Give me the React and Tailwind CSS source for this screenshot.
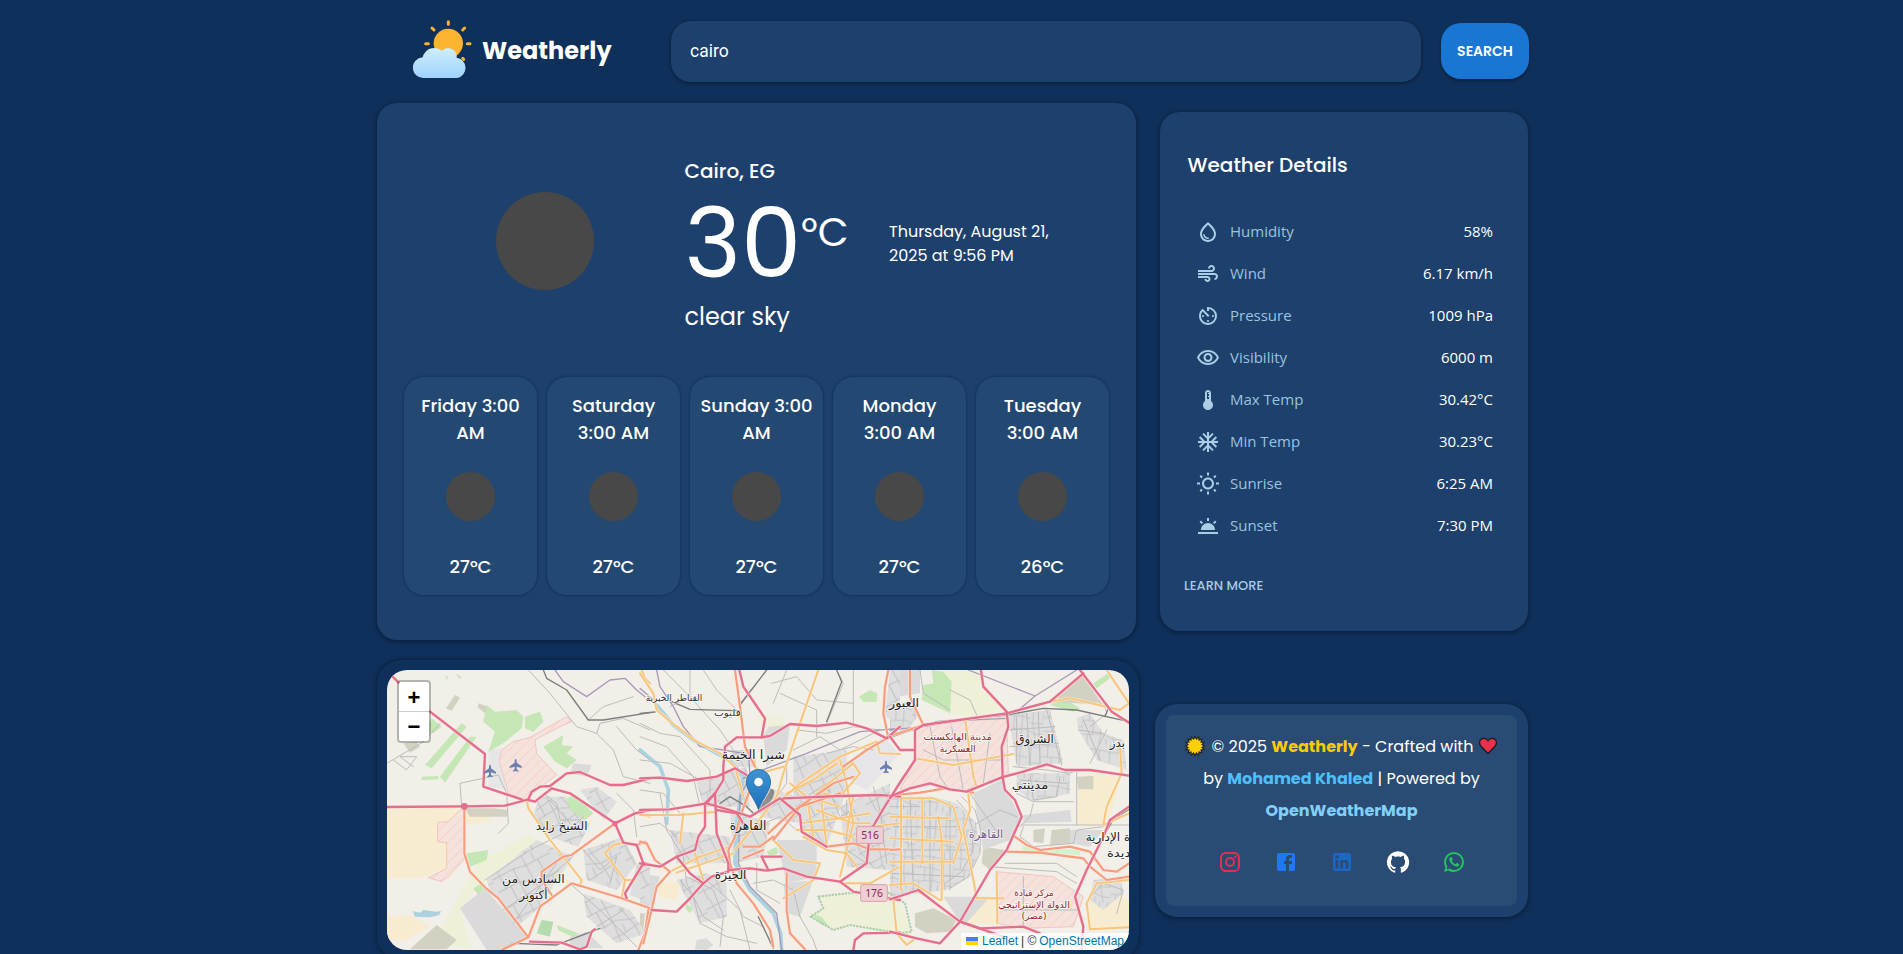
import React from "react";
import {
  MdOutlineWaterDrop,
  MdAir,
  MdAvTimer,
  MdOutlineVisibility,
  MdDeviceThermostat,
  MdAcUnit,
  MdOutlineWbSunny,
  MdWbTwilight,
} from "react-icons/md";

const forecast = [
  { day: "Friday 3:00 AM", temp: "27°C" },
  { day: "Saturday 3:00 AM", temp: "27°C" },
  { day: "Sunday 3:00 AM", temp: "27°C" },
  { day: "Monday 3:00 AM", temp: "27°C" },
  { day: "Tuesday 3:00 AM", temp: "26°C" },
];

const details = [
  { icon: MdOutlineWaterDrop, label: "Humidity", value: "58%" },
  { icon: MdAir, label: "Wind", value: "6.17 km/h" },
  { icon: MdAvTimer, label: "Pressure", value: "1009 hPa" },
  { icon: MdOutlineVisibility, label: "Visibility", value: "6000 m" },
  { icon: MdDeviceThermostat, label: "Max Temp", value: "30.42°C" },
  { icon: MdAcUnit, label: "Min Temp", value: "30.23°C" },
  { icon: MdOutlineWbSunny, label: "Sunrise", value: "6:25 AM" },
  { icon: MdWbTwilight, label: "Sunset", value: "7:30 PM" },
];

const socials = [
  {
    name: "Instagram",
    color: "#e4304e",
    d: "M7.8 2h8.4C19.4 2 22 4.6 22 7.8v8.4a5.8 5.8 0 0 1-5.8 5.8H7.8C4.6 22 2 19.4 2 16.2V7.8A5.8 5.8 0 0 1 7.8 2m-.2 2A3.6 3.6 0 0 0 4 7.6v8.8C4 18.39 5.61 20 7.6 20h8.8a3.6 3.6 0 0 0 3.6-3.6V7.6C20 5.61 18.39 4 16.4 4H7.6m9.65 1.5a1.25 1.25 0 0 1 1.25 1.25A1.25 1.25 0 0 1 17.25 8 1.25 1.25 0 0 1 16 6.75a1.25 1.25 0 0 1 1.25-1.25M12 7a5 5 0 0 1 5 5 5 5 0 0 1-5 5 5 5 0 0 1-5-5 5 5 0 0 1 5-5m0 2a3 3 0 0 0-3 3 3 3 0 0 0 3 3 3 3 0 0 0 3-3 3 3 0 0 0-3-3z",
  },
  {
    name: "Facebook",
    color: "#1f78f0",
    d: "M5 3h14a2 2 0 0 1 2 2v14a2 2 0 0 1-2 2h-4v-7h3v-3h-3V9c0-.55.45-1 1-1h2V5h-2.5C13.57 5 12 6.57 12 8.5V11h-2v3h2v7H5a2 2 0 0 1-2-2V5a2 2 0 0 1 2-2z",
  },
  {
    name: "LinkedIn",
    color: "#1c66c4",
    d: "M19 3a2 2 0 0 1 2 2v14a2 2 0 0 1-2 2H5a2 2 0 0 1-2-2V5a2 2 0 0 1 2-2h14m-.5 15.5v-5.3a3.26 3.26 0 0 0-3.26-3.26c-.85 0-1.84.52-2.32 1.3v-1.11h-2.79v8.37h2.79v-4.93c0-.77.62-1.4 1.39-1.4a1.4 1.4 0 0 1 1.4 1.4v4.93h2.79M6.88 8.56a1.68 1.68 0 0 0 1.68-1.68c0-.93-.75-1.69-1.68-1.69a1.69 1.69 0 0 0-1.69 1.69c0 .93.76 1.68 1.69 1.68m1.39 9.94v-8.37H5.5v8.37h2.77z",
  },
  {
    name: "GitHub",
    color: "#ffffff",
    d: "M12 1.27a11 11 0 00-3.48 21.46c.55.09.73-.28.73-.55v-1.84c-3.03.64-3.67-1.46-3.67-1.46-.55-1.29-1.28-1.65-1.28-1.65-.92-.65.1-.65.1-.65 1.1 0 1.73 1.1 1.73 1.1.92 1.65 2.57 1.2 3.21.92a2 2 0 01.64-1.47c-2.47-.27-5.04-1.19-5.04-5.5 0-1.1.46-2.1 1.2-2.84a3.76 3.76 0 010-2.93s.91-.28 3.11 1.1c1.8-.49 3.7-.49 5.5 0 2.1-1.38 3.02-1.1 3.02-1.1a3.76 3.76 0 01.1 2.93c.83.74 1.2 1.74 1.2 2.94 0 4.21-2.57 5.13-5.04 5.4.45.37.82.92.82 2.02v3.03c0 .27.1.64.73.55A11 11 0 0012 1.27",
  },
  {
    name: "WhatsApp",
    color: "#22c55e",
    d: "M16.75 13.96c.25.13.41.2.46.3.06.11.04.61-.21 1.18-.2.56-1.24 1.1-1.7 1.12-.46.02-.47.36-2.96-.73-2.49-1.09-3.99-3.75-4.11-3.92-.12-.17-.96-1.38-.92-2.61.05-1.22.69-1.8.95-2.04.24-.26.51-.29.68-.26h.47c.15 0 .36-.06.55.45l.69 1.87c.06.13.1.28.01.44l-.27.41-.39.42c-.12.12-.26.25-.12.5.12.26.62 1.09 1.32 1.78.91.88 1.71 1.17 1.95 1.3.24.14.39.12.54-.04l.81-.94c.19-.25.35-.19.58-.11l1.67.88M12 2a10 10 0 0 1 10 10 10 10 0 0 1-10 10c-1.97 0-3.8-.57-5.35-1.55L2 22l1.55-4.65A9.969 9.969 0 0 1 2 12 10 10 0 0 1 12 2m0 2a8 8 0 0 0-8 8c0 1.72.54 3.31 1.46 4.61L4.5 19.5l2.89-.96A7.95 7.95 0 0 0 12 20a8 8 0 0 0 8-8 8 8 0 0 0-8-8z",
  },
];

/* Map tiles: three side-by-side sections, each with its own origin. */
const tiles = [
  {
    x: -17,
    land: [
      ["#f7ecd0", "51,478 275,472 230,520 230,655 150,685 51,686"],
      ["#f7ecd0", "51,800 120,795 180,830 110,870 51,870"],
      ["#f7ecd0", "285,475 375,510 290,525"],
      ["#eef0d8", "190,880 320,640 480,550 500,570 350,690 270,775 300,895"],
      ["#d3d1c1", "255,135 270,143 245,182 228,175"],
      ["#d3d1c1", "325,160 355,170 345,190 323,172"],
      ["#d3d1c1", "285,475 370,475 415,480 410,500 300,500"],
      ["#d3d1c1", "200,825 260,870 230,898 120,898"],
      ["#d3d1c1", "100,280 140,275 150,290 120,308"],
      ["#e6e6e6", "355,300 395,295 388,335 410,420 355,410"],
      ["#c5e6b5", "350,165 375,185 440,180 460,200 455,235 400,280 355,305 375,245 340,215"],
      ["#c5e6b5", "465,200 510,185 520,215 490,245 465,235"],
      ["#c5e6b5", "165,345 275,220 290,230 185,355"],
      ["#c5e6b5", "155,380 205,378 205,388 155,390"],
      ["#c5e6b5", "210,380 300,260 320,260 225,398"],
      ["#c5e6b5", "520,290 580,255 575,285 610,290 590,310 620,330 590,355 555,335"],
      ["#c5e6b5", "575,450 615,435 670,490 640,515 590,480"],
      ["#c5e6b5", "290,610 355,600 350,630 300,650"],
      ["#c5e6b5", "185,205 215,230 190,250 165,240"],
      ["#c5e6b5", "225,80 235,78 230,90"],
      ["#c5e6b5", "258,70 275,82 268,88"],
      ["#c5e6b5", "560,825 625,850 610,862 565,840"],
      ["#c5e6b5", "310,715 335,700 345,712 325,735"],
      ["#b5dcae", "515,810 550,815 540,860 500,850"],
      ["#aad3df", "128,783 150,788 160,780 200,785 213,783 208,795 180,802 135,800"],
    ],
    city: [
      "505,440 590,440 600,480 660,520 625,590 540,560 490,500",
      "630,420 680,410 740,455 700,510",
      "350,690 500,570 610,620 500,780 440,830 360,720",
      "640,600 760,560 800,640 740,720 650,690",
      "640,730 780,780 830,850 740,880 650,800",
      "800,640 840,650 840,760 780,735",
    ],
    plain: [
      "270,775 345,715 470,860 400,900 350,900",
      "610,340 665,345 650,380 600,370",
      "600,860 650,845 700,895 600,895",
    ],
    military: [
      "270,480 285,475 285,625 235,680 215,695 175,683 230,655 230,578 203,575 203,517 235,515",
      "395,300 430,275 480,262 590,200 605,215 560,235 495,270 500,310 560,375 500,420 470,450 415,430 388,335",
    ],
    river: [],
    metro: ["555,60 580,95 650,140 720,90 765,85 800,120 825,140"],
    minor: [
      "475,60 540,130 620,230 680,250 730,300 760,380 840,400",
      "51,340 160,275 210,220",
      "70,330 110,360 140,320 90,320 130,350",
      "270,400 385,375 410,430 415,520 385,550",
      "270,400 275,470",
      "345,690 480,600 600,540 640,500",
      "400,780 520,700 640,590",
      "430,820 560,640",
      "600,700 700,790 800,890",
      "680,830 760,780",
      "640,600 690,660 740,620 720,700",
      "655,210 700,170 790,140",
      "680,250 690,220 760,205 840,240",
      "740,230 800,300 840,330",
      "740,430 790,480 800,560",
      "520,430 560,460 570,510 620,510",
      "500,480 540,450 600,520",
    ],
    rail: ["520,60 530,85 590,120 655,210 700,210 840,188", "400,895 430,880 560,885 690,835"],
    yellow: [
      "470,448 475,475 540,570 635,690 630,705",
      "755,745 765,690 735,650 705,610 730,585 760,578",
      "765,690 795,690",
      "795,490 840,500",
      "815,60 825,85 840,100",
    ],
    orange: [
      "283,470 283,610 300,665 345,712 385,745 475,862 395,900",
      "475,862 510,770 605,700 755,745 840,775",
      "735,520 605,615 580,620 515,665 515,690 545,735",
      "800,585 825,575 840,600",
      "835,780 825,850 805,900",
    ],
    trunk: [
      "66,78 86,98",
      "180,185 345,312 340,410 455,448",
      "51,471 283,469 405,467 475,448 485,425 510,410 540,408 590,370 630,366 720,405 760,405 840,385",
      "475,450 495,455 545,415 600,430 735,520 760,578 800,585 820,640 840,643",
      "735,520 795,490 840,480",
      "820,640 765,730 770,745",
      "480,875 575,878 630,898 650,890 665,845 675,838",
    ],
    planes: [[437, 346], [360, 363]],
  },
  {
    x: 253,
    land: [
      ["#f7ecd0", "55,690 120,700 110,750 55,740"],
      ["#eef0d8", "345,195 430,200 430,240 380,235"],
      ["#e6e6ea", "600,360 730,260 780,310 680,420 640,400"],
      ["#eef0d8", "540,740 640,728 740,725 780,760 780,845 700,840 630,825 580,840 510,800 550,775"],
      ["#c5e6b5", "657,140 690,120 712,130 710,155 670,155"],
      ["#c5e6b5", "135,760 160,775 150,790 138,778"],
      ["#c5e6b5", "510,790 545,800 570,835 540,820"],
      ["#c5e6b5", "380,605 410,590 415,610 390,620"],
      ["#c5e6b5", "660,610 680,615 675,630"],
      ["#d3d1c1", "0,790 15,790 10,840 0,840"],
    ],
    city: [
      "270,300 345,300 345,350 290,350",
      "170,395 320,350 330,470 190,470",
      "350,400 470,440 480,520 360,500",
      "460,320 620,300 620,420 560,590 490,560 460,440",
      "90,540 270,560 270,640 110,640",
      "110,690 200,670 260,700 260,800 180,820",
      "600,470 750,400 750,660 620,650",
      "270,480 390,520 370,620 280,640",
      "750,60 780,60 780,220 735,200",
    ],
    plain: [
      "385,230 450,225 440,300 380,350 370,260",
      "410,570 530,570 530,680 440,700",
      "0,670 60,680 30,770 0,770",
      "430,700 520,690 480,800 440,790",
      "170,870 200,865 220,885 200,900 165,898",
    ],
    military: [],
    river: [
      "50,165 100,225 160,270 230,310 270,330 310,380 300,450 290,520 285,640 330,720 400,790 422,850 425,900",
      "0,300 60,350 85,420 80,520",
    ],
    metro: [
      "50,60 60,110 100,170 130,230 180,290 250,300 310,310",
      "325,300 330,380 300,440 295,640 330,710 410,790 425,900",
      "310,385 380,355 500,310 660,245 780,235",
      "0,115 40,150",
    ],
    minor: [
      "0,220 60,250 120,260 210,360 210,430",
      "70,60 150,140 240,240 280,300",
      "150,60 150,140 90,170",
      "190,60 230,120 290,180",
      "0,260 80,290 160,380 180,470",
      "0,330 90,340 180,390",
      "0,420 70,430 120,490",
      "60,430 80,540 130,620 140,700 190,800 250,840",
      "0,530 60,520 110,560",
      "120,690 160,740 180,820 260,860 350,880",
      "140,680 220,720 250,800 240,890",
      "200,690 300,780 330,900",
      "270,720 310,800 370,830",
      "380,60 300,160",
      "395,100 470,80 530,150 640,160",
      "400,160 440,60",
      "590,60 610,100 560,220",
      "420,130 530,180 530,260",
      "640,60 640,220",
      "470,240 560,250 640,230 720,240",
      "460,300 540,260 600,300 720,240",
      "560,310 640,290 700,300",
      "350,530 420,500 470,540",
      "380,480 440,400 440,330",
      "350,640 350,720 420,760",
      "500,440 560,400 600,500 640,480",
      "620,450 620,600 680,640",
      "700,410 720,480 740,640",
      "340,700 400,690 460,720 480,800",
      "480,800 520,870 530,900",
    ],
    rail: [
      "380,60 300,165 302,190",
      "95,155 150,178 290,182",
      "0,190 45,186",
      "590,60 605,95 560,215",
      "240,460 270,440 320,470 340,490",
      "355,800 400,895",
    ],
    yellow: [
      "535,60 480,220 430,370 410,440 350,520 285,600",
      "0,70 40,130 50,180 110,230 170,275 240,310 285,350 310,440",
      "360,370 430,350",
      "430,445 480,400 600,320 710,275",
      "440,430 520,390 590,340",
      "480,520 600,505 690,490",
      "530,480 640,520 690,520",
      "90,665 180,620 270,590",
      "110,668 280,610",
      "130,490 120,580",
      "0,495 120,495 230,485",
      "165,610 190,690",
      "400,570 460,630 540,640 520,690 430,745",
      "530,430 640,340 660,370 600,440 550,430",
      "545,460 560,590",
      "600,330 620,400 640,520 620,600 600,680",
      "490,560 560,600 620,610 650,650",
      "500,440 520,560",
      "710,275 720,310 780,312",
      "450,400 500,440 600,470",
      "340,300 345,350 390,400",
      "470,540 560,540 640,560",
      "600,440 640,440 620,550",
      "700,530 780,520",
      "600,700 690,700 780,650",
    ],
    orange: [
      "285,60 300,170 315,290 345,350",
      "745,60 735,110 730,190 745,265",
      "330,420 300,500 285,560 265,600 270,640 290,700 340,760 390,840 400,890",
      "0,575 20,580 45,630 90,665 50,710 30,800 10,880",
      "385,550 450,490 580,400 640,380",
      "400,570 480,470 600,430",
      "310,590 360,590 400,560",
      "310,625 370,600",
      "440,670 440,780 450,850 495,898",
      "560,590 640,580 690,598 780,598",
      "750,260 680,300 610,350",
    ],
    trunk: [
      "298,60 310,110 375,205 365,262",
      "0,385 60,383 140,393 230,380 285,355 320,375",
      "365,262 290,262 255,290 250,350 250,390 225,430 200,460",
      "365,262 390,258 450,222 530,228 620,218 680,235 740,265 780,230",
      "0,480 90,478 200,460 270,480 330,500 420,445 480,495 485,545 560,590",
      "0,640 60,650 110,620 165,600 175,560 195,530 195,460 225,430",
      "110,620 150,670 190,700 215,680 265,665 265,640 230,550 225,430",
      "230,480 290,490 310,520",
      "265,660 330,655 380,662 430,655 500,680 600,695 680,640 690,545 740,460 780,400",
      "35,780 110,785 150,745 190,700",
      "430,445 600,438 720,435 780,440",
      "600,695 640,725 750,745 780,750",
      "365,620 425,620",
      "365,620 385,660",
      "640,900 645,870 670,850 780,848",
    ],
    planes: [[738, 351]],
  },
  {
    x: 503,
    land: [
      ["#eef0d8", "160,60 270,60 290,110 340,180 240,200 180,190"],
      ["#f7ecd0", "590,370 690,380 670,470 640,530 560,525 565,400"],
      ["#f7ecd0", "245,760 320,740 320,825 230,820"],
      ["#f7ecd0", "620,695 717,750 717,830 600,835 590,760"],
      ["#c5e6b5", "125,60 160,65 185,95 180,190 95,150 100,105 130,100"],
      ["#c5e6b5", "480,165 520,145 570,175 550,185"],
      ["#c5e6b5", "610,100 655,70 660,85 620,115"],
      ["#eef0d8", "0,755 30,765 50,800 65,855 20,840 0,840"],
      ["#d3f0cf", "395,590 570,600 570,615 400,610"],
      ["#d3d1c1", "280,590 345,600 300,660 275,640"],
      ["#d3d1c1", "75,790 130,775 200,810 180,845 110,850 75,830"],
      ["#d3d1c1", "490,155 575,75 640,165 560,160"],
      ["#d3d1c1", "430,540 465,535 460,580 430,575"],
      ["#d3d1c1", "485,540 540,535 540,580 480,585"],
      ["#d3d1c1", "560,380 610,378 610,418 565,418"],
    ],
    city: [
      "0,180 60,150 90,190 60,230 0,245",
      "355,195 480,180 520,340 470,345 380,350",
      "560,205 600,190 640,250 700,270 710,360 620,330 565,240",
      "0,440 130,440 200,460 260,520 270,600 240,680 170,720 0,740",
      "380,370 540,370 540,430 430,455 380,420",
      "610,690 690,680 700,730 640,780 600,750",
    ],
    plain: [
      "10,60 90,60 90,130 20,140",
      "250,430 335,390 390,500 360,570 280,600",
      "540,540 640,540 600,590 540,580",
      "160,740 300,740 220,830",
      "400,495 540,480 545,515 400,520",
    ],
    military: [
      "95,230 350,192 355,380 210,425 120,400 30,420 75,330 75,250",
      "320,665 490,680 580,740 550,830 400,835 320,820",
    ],
    river: [],
    metro: ["235,60 435,138 560,60", "435,138 380,185", "350,205 200,212 100,230 0,240"],
    minor: [
      "90,60 100,130 180,180",
      "120,230 150,380 170,410",
      "100,300 160,330 340,330",
      "185,230 220,420",
      "300,250 280,400",
      "370,350 470,360 540,370 560,360 560,525",
      "380,430 430,455 550,455",
      "395,525 717,525",
      "400,530 390,560 430,590 550,580 560,540 640,530",
      "430,460 420,500 390,530",
      "300,650 500,665 560,700",
      "345,640 500,640 560,680",
      "400,680 400,830",
      "340,780 560,780",
      "380,200 380,340",
      "410,190 420,345",
      "445,185 450,340",
      "470,180 515,345",
      "355,240 495,230",
      "360,290 505,280",
      "565,240 640,250",
      "580,210 630,330",
      "600,340 650,240",
      "640,150 650,190 600,230",
      "240,430 330,560",
      "260,520 330,480 380,500",
      "215,440 255,480 272,540 270,610 235,680 180,715",
      "200,450 235,490 250,550 245,610 215,665 165,700",
      "0,470 90,470",
      "10,530 200,530",
      "0,600 240,600",
      "60,440 70,720",
      "120,440 120,730",
      "180,470 180,720",
      "0,670 220,680",
      "600,740 640,700 700,720 680,790",
      "390,390 530,400",
      "420,375 430,450 500,440 510,380",
      "180,120 240,150 260,195",
    ],
    rail: ["0,262 140,215 350,195 460,175 560,180 717,215", "570,60 655,175 645,200", "717,478 670,508 640,560"],
    yellow: [
      "0,500 180,505",
      "0,565 190,575",
      "0,635 190,635",
      "33,440 33,720",
      "97,450 97,640",
      "145,500 155,570 155,750",
      "35,445 130,445 190,470 215,560 190,640",
      "235,430 240,480 220,540 250,690 260,745 340,745",
      "75,325 190,345 370,312",
      "225,205 250,380 260,410",
      "320,665 322,820",
      "600,838 717,832",
      "600,838 590,760 620,700 717,690",
      "480,155 540,145 690,180 717,160",
      "650,60 717,160",
      "690,290 695,370 650,470 640,525 717,490",
      "0,705 70,700 150,750",
      "10,750 20,850 50,885 70,870",
    ],
    orange: [
      "60,60 60,140 100,225 0,258",
      "375,560 410,585 450,600 540,590 600,605 640,660 680,665 717,640",
      "350,605 450,608 580,625 600,650 650,690 717,680",
      "0,600 30,598",
      "15,435 90,428 165,415 250,428",
    ],
    trunk: [
      "273,60 280,110 350,185 355,230 335,290 338,382 345,420 375,450 395,500 350,600 300,660 210,815 150,880 80,865 0,845",
      "0,445 25,405 75,330",
      "0,440 60,415 120,400 180,418 230,425 335,382 400,365 470,343 525,360 600,360 717,377",
      "75,330 75,240 100,225 350,190 480,155 580,70",
      "75,300 30,300 0,260",
      "570,60 665,185 717,218",
      "717,470 660,510 640,560 590,660 555,740 580,830 575,900",
      "0,748 85,720 150,770 210,815 270,835 400,830 450,850",
      "210,815 340,860",
    ],
    planes: [],
  },
];

const places = [
  [0, 575, 541, 155, "الشيخ زايد", 36, "#222"],
  [0, 490, 699, 188, "السادس من", 36, "#222"],
  [0, 490, 748, 85, "أكتوبر", 36, "#222"],
  [1, 102, 154, 170, "القناطر الخيرية", 27, "#333"],
  [1, 262, 198, 80, "قليوب", 28, "#333"],
  [1, 340, 328, 190, "شبرا الخيمة", 38, "#222"],
  [1, 324, 541, 110, "القاهرة", 38, "#222"],
  [1, 272, 687, 95, "الجيزة", 36, "#222"],
  [2, 42, 170, 90, "العبور", 36, "#222"],
  [2, 203, 269, 205, "مدينة الهايكستب", 28, "#8f1f2c"],
  [2, 203, 305, 108, "العسكرية", 28, "#8f1f2c"],
  [2, 434, 278, 115, "الشروق", 36, "#222"],
  [2, 682, 290, 46, "بدر", 34, "#222"],
  [2, 420, 418, 110, "مدينتي", 34, "#222"],
  [2, 288, 563, 104, "القاهرة", 34, "#7a5a8c"],
  [2, 654, 572, 134, "ة الإدارية", 34, "#222"],
  [2, 686, 622, 70, "ديدة", 34, "#222"],
  [2, 432, 738, 118, "مركز قيادة", 27, "#8f1f2c"],
  [2, 432, 773, 215, "الدولة الإستراتيجي", 27, "#8f1f2c"],
  [2, 432, 808, 75, "(مصر)", 27, "#8f1f2c"],
];

function Lines({ lines, color, width, casing }) {
  return (
    <g fill="none" strokeLinejoin="round" strokeLinecap="round">
      {casing && lines.map((p, i) => <polyline key={"c" + i} points={p} stroke={casing} strokeWidth={width + 3} />)}
      {lines.map((p, i) => (
        <polyline key={i} points={p} stroke={color} strokeWidth={width} />
      ))}
    </g>
  );
}

function CityMap() {
  const at = (t) => `translate(${t.x} -20) scale(0.33333)`;
  const layer = (render) =>
    tiles.map((t) => (
      <g key={t.x} transform={at(t)}>
        {render(t)}
      </g>
    ));
  const street =
    "M0 22H70L110 30H190M0 64H60L100 72M100 90H190M0 118L80 112L120 130H190M0 158H90L150 150M24 0V64M70 22V112L64 190M110 0V90L124 150V190M150 30V90M168 90L150 150V190M40 64V118M20 118V190M92 130V158M140 0V30";
  return (
    <svg viewBox="0 0 742 280" className="block h-[280px] w-[742px]">
      <defs>
        <pattern id="streets" width="190" height="190" patternUnits="userSpaceOnUse" patternTransform="rotate(-28)">
          <rect width="190" height="190" fill="#dedede" />
          <path d={street} stroke="#bdbdbd" strokeWidth="2.6" fill="none" />
        </pattern>
        <pattern id="grid" width="150" height="150" patternUnits="userSpaceOnUse" patternTransform="rotate(4) scale(0.79)">
          <rect width="190" height="190" fill="#dedede" />
          <path d={street} stroke="#bfbfbf" strokeWidth="3" fill="none" />
        </pattern>
        <pattern id="hatch" width="22" height="22" patternUnits="userSpaceOnUse" patternTransform="rotate(45)">
          <rect width="22" height="22" fill="#f5e2dc" />
          <path d="M0 0V22" stroke="#f2c2bd" strokeWidth="2.5" />
        </pattern>
        <linearGradient id="pin" x1="0" y1="0" x2="0" y2="1">
          <stop offset="0" stopColor="#3f94cf" />
          <stop offset="1" stopColor="#1c6fc0" />
        </linearGradient>
      </defs>
      <rect width="742" height="280" fill="#f2efe9" />
      {layer((t) => t.land.map(([fill, p], i) => <polygon key={i} points={p} fill={fill} />))}
      {layer((t) => t.plain.map((p, i) => <polygon key={i} points={p} fill="#dadada" />))}
      {layer((t) => t.city.map((p, i) => <polygon key={i} points={p} fill={t.x === 503 ? "url(#grid)" : "url(#streets)"} />))}
      {layer((t) => t.military.map((p, i) => <polygon key={i} points={p} fill="url(#hatch)" stroke="#f0b4ae" strokeWidth="2" />))}
      {layer((t) => <Lines lines={t.river} color="#aad3df" width={11} />)}
      {layer((t) => <Lines lines={t.minor} color="#bcbcbc" width={3} />)}
      {layer((t) => <Lines lines={t.metro} color="#a79ab8" width={4} />)}
      {layer((t) => <Lines lines={t.rail} color="#7d7d7d" width={4} />)}
      <g transform={at(tiles[1])}>
        <path d="M535 740L620 730L740 725L795 760L815 845L780 850L720 840L630 825L580 840L512 800L550 775Z" fill="none" stroke="#a9cfa9" strokeWidth="6" strokeDasharray="7 3" />
      </g>
      {layer((t) => <Lines lines={t.yellow} color="#f6c67f" width={6} casing="#f8efdc" />)}
      {layer((t) => <Lines lines={t.orange} color="#f79d7d" width={6.5} casing="#faeae0" />)}
      {layer((t) => <Lines lines={t.trunk} color="#e56f8a" width={7} casing="#f6e3e3" />)}
      <g transform={at(tiles[0])} fill="#e56f8a">
        <circle cx="283" cy="469" r="10" />
        <circle cx="735" cy="521" r="8" />
        <circle cx="820" cy="642" r="7" />
      </g>
      {layer((t) =>
        t.planes.map(([x, y], i) => (
          <path
            key={i}
            transform={`translate(${x} ${y})`}
            d="M0 -19C3 -19 3 -13 3 -8L18 3V8L3 4V11L8 16V19L0 17L-8 19V16L-3 11V4L-18 8V3L-3 -8C-3 -13 -3 -19 0 -19Z"
            fill="#6b7fae"
          />
        ))
      )}
      <g transform={at(tiles[1])} fontFamily="'Noto Sans', sans-serif" fontSize="31" textAnchor="middle" fill="#8a2450">
        <rect x="650" y="530" width="80" height="50" rx="5" fill="#edd0d5" stroke="#d9a0ab" strokeWidth="3" />
        <text x="690" y="566">516</text>
        <rect x="662" y="704" width="80" height="50" rx="5" fill="#edd0d5" stroke="#d9a0ab" strokeWidth="3" />
        <text x="702" y="740">176</text>
      </g>
      {places.map(([t, x, y, w, name, size, color]) => (
        <g key={name + x} transform={at(tiles[t])}>
          <text
            x={x}
            y={y}
            textAnchor="middle"
            fontFamily="'DejaVu Sans', sans-serif"
            fontSize={size}
            fill={color}
            stroke="#ffffff"
            strokeOpacity="0.7"
            strokeWidth="5"
            paintOrder="stroke"
            textLength={w}
            lengthAdjust="spacingAndGlyphs"
          >
            {name}
          </text>
        </g>
      ))}
      <path d="M372 139L384 119C389 118 388 126 383 132Z" fill="#000" opacity="0.35" />
      <path d="M371.500 139.500C368 129 359.500 121 359.500 112C359.500 105 365 99.500 371.500 99.500C378 99.500 383.500 105 383.500 112C383.500 121 375 129 371.500 139.500Z" fill="url(#pin)" stroke="#2e6ea6" strokeWidth="1" />
      <circle cx="371.500" cy="112" r="4.300" fill="#fff" />
    </svg>
  );
}

function Logo() {
  return (
    <svg viewBox="0 0 180 180" className="h-[60px] w-[60px] shrink-0">
      <defs>
        <linearGradient id="cloud" x1="0" y1="0" x2="0" y2="1">
          <stop offset="0" stopColor="#cdeffc" />
          <stop offset="1" stopColor="#9fd3fb" />
        </linearGradient>
      </defs>
      <g stroke="#fdb02c" strokeWidth="9" strokeLinecap="round">
        <path d="M106 8V16M57 27L63 33M155 27L149 33M38 74H46M163 74H171M149 118L152 121" />
      </g>
      <circle cx="106" cy="73" r="44" fill="#fdb430" />
      <path d="M32 177A31 31 0 0 1 29 115A36 36 0 0 1 87 95A26 26 0 0 1 131 116A31 31 0 0 1 133 177Z" fill="url(#cloud)" />
    </svg>
  );
}

function SunEmoji() {
  const pts = Array.from({ length: 32 }, (_, i) => {
    const r = i % 2 ? 6.2 : 8.6;
    const a = (i * Math.PI) / 16;
    return `${(10 + r * Math.cos(a)).toFixed(2)},${(10 + r * Math.sin(a)).toFixed(2)}`;
  }).join(" ");
  return (
    <svg viewBox="0 0 20 20" className="mr-0.5 inline-block h-5 w-5 align-[-4px]">
      <polygon points={pts} fill="#fbd009" stroke="#1d1d1d" strokeWidth="2" paintOrder="stroke" />
    </svg>
  );
}

function HeartEmoji() {
  return (
    <svg viewBox="0 0 20 20" className="inline-block h-5 w-5 align-[-4px]">
      <path d="M10 17.500L2.500 9.700C0.500 7.200 1.500 2.500 5.500 2.300C7.700 2.200 9.200 3.300 10 4.800C10.800 3.300 12.300 2.200 14.500 2.300C18.500 2.500 19.500 7.200 17.500 9.700Z" fill="#ec2f4b" stroke="#1d1d1d" strokeWidth="1.300" />
    </svg>
  );
}

export default function App() {
  return (
    <div className="h-[954px] w-full overflow-hidden bg-[#0f305b] font-['Poppins','Inter',sans-serif] text-white">
      <div className="ml-[377px] w-[1152px]">
        <header className="flex h-[103px] items-start pt-[21px]">
          <div className="-mt-[2px] flex w-[294px] items-center pl-[36px]">
            <Logo />
            <span className="ml-[9px] pt-1 text-[24px] leading-9 font-bold">Weatherly</span>
          </div>
          <div className="flex h-[61px] w-[750px] items-center rounded-[20px] bg-[#1d406d] px-[19px] font-['Roboto',sans-serif] text-[17.5px] shadow-[0_1px_3px_1px_rgba(0,0,0,0.3)]">
            cairo
          </div>
          <button className="mt-[2px] ml-5 h-14 w-[88px] rounded-[20px] bg-[#1976d2] text-[14px] font-semibold shadow-[0_2px_3px_rgba(0,0,0,0.35)]">
            SEARCH
          </button>
        </header>

        <div className="flex">
          <div className="w-[762px] shrink-0">
            <section className="h-[537px] w-[759px] rounded-[20px] bg-[#1d406d] px-[27px] shadow-[0_1px_4px_1px_rgba(0,0,0,0.35)]">
              <div className="flex h-[274px]">
                <div className="w-[280.5px] pt-[89px] pl-[92px]">
                  <div className="h-[98px] w-[98px] rounded-full bg-[#484848]" />
                </div>
                <div className="w-[204.5px] pt-[52px]">
                  <div className="text-[20px] leading-8 font-medium">Cairo, EG</div>
                  <div className="mt-[4px] flex h-[100px] items-start">
                    <span className="text-[96px] leading-[105px]">30</span>
                    <span className="text-[40px] leading-[83px]">°C</span>
                  </div>
                  <div className="mt-[8px] text-[24px] leading-9">clear sky</div>
                </div>
                <div className="w-[180px] pt-[117px] text-[16px] leading-6">
                  Thursday, August 21,
                  <br />
                  2025 at 9:56 PM
                </div>
              </div>
              <div className="flex gap-[10px]">
                {forecast.map((f) => (
                  <div
                    key={f.day}
                    className="flex h-[218px] w-[133px] flex-col items-center rounded-[20px] bg-[#234871] px-1 pt-[15px] text-[18px] leading-[27px] font-medium shadow-[0_0_2px_1px_rgba(10,30,60,0.35)]"
                  >
                    <div className="h-[54px] w-[115px] text-center">{f.day}</div>
                    <div className="mt-[26px] h-[49px] w-[49px] rounded-full bg-[#484848]" />
                    <div className="mt-[32px]">{f.temp}</div>
                  </div>
                ))}
              </div>
            </section>

            <section className="mt-5 h-[300px] w-[762px] rounded-[24px] bg-[#0f305b] p-[10px] shadow-[0_0_4px_1px_rgba(0,0,0,0.35)]">
              <div className="relative h-[280px] w-[742px] overflow-hidden rounded-[20px]">
                <CityMap />
                <div className="absolute top-[10px] left-[10px] w-[34px] rounded-[4px] border-2 border-black/25 bg-white bg-clip-padding text-center font-['Liberation_Sans',sans-serif] text-[22px] font-bold text-black">
                  <div className="flex h-[30px] items-center justify-center border-b border-[#ccc]">
                    <span className="block pt-px">+</span>
                  </div>
                  <div className="flex h-[29px] items-center justify-center">
                    <span className="block">−</span>
                  </div>
                </div>
                <div className="absolute right-0 bottom-0 flex h-[17px] items-center bg-white/80 pr-[5px] pb-px pl-[5px] font-['Liberation_Sans',sans-serif] text-[12px] leading-4 whitespace-nowrap text-[#333]">
                  <svg viewBox="0 0 12 8" className="mr-1 h-2 w-3">
                    <path fill="#4C7BE1" d="M0 0h12v4H0z" />
                    <path fill="#FFD500" d="M0 4h12v4H0z" />
                  </svg>
                  <span className="text-[#0078a8]">Leaflet</span>
                  <span className="mx-[3px]">| ©</span>
                  <span className="text-[#0078a8]">OpenStreetMap</span>
                </div>
              </div>
            </section>
          </div>

          <div className="ml-[16px] w-[373px] shrink-0 pt-[9px]">
            <section className="ml-[5px] h-[519px] w-[368px] rounded-[20px] bg-[#1d406d] shadow-[0_1px_4px_1px_rgba(0,0,0,0.35)]">
              <h2 className="px-[27.5px] pt-[37px] text-[20px] leading-8 font-medium">Weather Details</h2>
              <ul className="mt-[29px] pr-[35px] pl-9">
                {details.map(({ icon: Icon, label, value }) => (
                  <li key={label} className="flex h-[42px] items-center font-['Segoe_UI','Open_Sans',sans-serif] text-[15px]">
                    <Icon className="mt-0.5 h-6 w-6 text-[#abcde5]" />
                    <span className="ml-[10px] text-[#9cc3de]">{label}</span>
                    <span className="ml-auto">{value}</span>
                  </li>
                ))}
              </ul>
              <div className="mt-[28px] px-6 text-[13px] leading-6 font-medium text-[#a9c9e0]">LEARN MORE</div>
            </section>

            <section className="mt-[73px] h-[213px] w-[373px] rounded-[22px] bg-[#1d406d] p-[11px] shadow-[0_1px_4px_1px_rgba(0,0,0,0.35)]">
              <div className="h-[191px] rounded-[8px] bg-[#2a4b74] pt-4 text-center text-[16px] leading-8">
                <div>
                  <SunEmoji /> © 2025 <b className="text-[#fbca08]">Weatherly</b> - Crafted with <HeartEmoji />
                </div>
                <div>
                  by <b className="text-[#4fbff7]">Mohamed Khaled</b> | Powered by
                </div>
                <div>
                  <b className="text-[#81d0fa]">OpenWeatherMap</b>
                </div>
                <div className="mt-[23px] flex justify-center gap-8">
                  {socials.map((s) => (
                    <svg key={s.name} viewBox="0 0 24 24" className="h-6 w-6">
                      <path d={s.d} fill={s.color} fillRule="evenodd" />
                    </svg>
                  ))}
                </div>
              </div>
            </section>
          </div>
        </div>
      </div>
    </div>
  );
}
